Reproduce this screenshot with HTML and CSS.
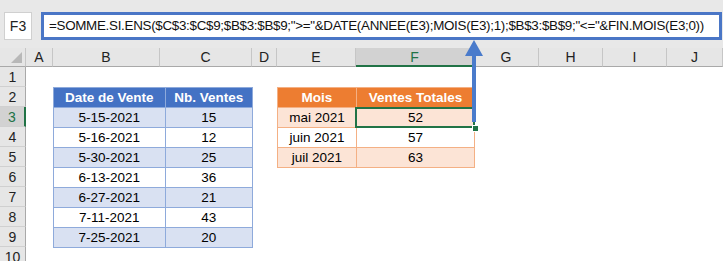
FILE: index.html
```html
<!DOCTYPE html>
<html lang="fr">
<head>
    <meta charset="UTF-8">
    <title>SOMME.SI.ENS par mois</title>
    <link rel="stylesheet" href="styles.css">
</head>
<body>
<div class="page">
    <div class="formulaBar">
        <div class="nameBox">F3</div>
        <div class="formulaBox">=SOMME.SI.ENS($C$3:$C$9;$B$3:$B$9;"&gt;="&amp;DATE(ANNEE(E3);MOIS(E3);1);$B$3:$B$9;"&lt;="&amp;FIN.MOIS(E3;0))</div>
    </div>
    <div class="sheet">
        <div class="corner"><span class="triangle"></span></div>
        <div class="colHead">A</div>
        <div class="colHead">B</div>
        <div class="colHead">C</div>
        <div class="colHead">D</div>
        <div class="colHead">E</div>
        <div class="colHead active">F</div>
        <div class="colHead">G</div>
        <div class="colHead">H</div>
        <div class="colHead">I</div>
        <div class="colHead">J</div>

        <div class="rowHead r1">1</div>
        <div class="rowHead r2">2</div>
        <div class="rowHead r3 active">3</div>
        <div class="rowHead r4">4</div>
        <div class="rowHead r5">5</div>
        <div class="rowHead r6">6</div>
        <div class="rowHead r7">7</div>
        <div class="rowHead r8">8</div>
        <div class="rowHead r9">9</div>
        <div class="rowHead r10">10</div>

        <table class="blueTable">
            <tr><th>Date de Vente</th><th>Nb. Ventes</th></tr>
            <tr class="band"><td>5-15-2021</td><td>15</td></tr>
            <tr><td>5-16-2021</td><td>12</td></tr>
            <tr class="band"><td>5-30-2021</td><td>25</td></tr>
            <tr><td>6-13-2021</td><td>36</td></tr>
            <tr class="band"><td>6-27-2021</td><td>21</td></tr>
            <tr><td>7-11-2021</td><td>43</td></tr>
            <tr class="band"><td>7-25-2021</td><td>20</td></tr>
        </table>

        <table class="orangeTable">
            <tr><th>Mois</th><th>Ventes Totales</th></tr>
            <tr class="band"><td>mai 2021</td><td class="selected">52<span class="handle"></span></td></tr>
            <tr><td>juin 2021</td><td>57</td></tr>
            <tr class="band"><td>juil 2021</td><td>63</td></tr>
        </table>
    </div>
    <svg class="arrow" width="22" height="86" viewBox="0 0 22 86">
        <path d="M11 2 L20 18 L13 18 L13 84 L9 84 L9 18 L2 18 Z" fill="#4a7bcb"/>
    </svg>
</div>
</body>
</html>
```

FILE: styles.css
```css
body {
    margin: 0;
    overflow: hidden;
    background-color: white;
    font-family: "Liberation Sans", Arial, sans-serif;
}

.page {
    position: relative;
    width: 723px;
    height: 261px;
    overflow: hidden;
}

.formulaBar {
    display: flex;
    align-items: flex-start;
    gap: 9px;
    height: 48px;
    padding: 12px 1px 0 4px;
    box-sizing: border-box;
    background-color: #e8e8e8;
}

.nameBox {
    width: 28px;
    height: 28px;
    box-sizing: border-box;
    border: 1px solid #d0d0d0;
    background-color: white;
    font-size: 14px;
    line-height: 26px;
    text-align: center;
    color: #222;
}

.formulaBox {
    flex: 1;
    height: 28px;
    box-sizing: border-box;
    border: 3px solid #4a76c6;
    background-color: white;
    padding-left: 5px;
    font-size: 13.4px;
    letter-spacing: -0.3px;
    line-height: 22px;
    color: #111;
    white-space: nowrap;
    overflow: hidden;
}

.sheet {
    display: grid;
    grid-template-columns: 26px 27px 107px 92px 25px 79px 118px 65px 64px 64px 56px;
    grid-template-rows: 19px repeat(10, 20px);
}

.corner {
    position: relative;
    background-color: #e6e6e6;
    border-right: 1px solid #c6c6c6;
    border-bottom: 1px solid #a9a9a9;
    box-sizing: border-box;
}

.triangle {
    position: absolute;
    right: 3px;
    bottom: 3px;
    width: 0;
    height: 0;
    border-left: 11px solid transparent;
    border-bottom: 11px solid #b8b8b8;
}

.colHead {
    background-color: #e6e6e6;
    border-right: 1px solid #c6c6c6;
    border-bottom: 1px solid #a9a9a9;
    box-sizing: border-box;
    font-size: 14px;
    line-height: 18px;
    text-align: center;
    color: #222;
}

.colHead.active {
    background-color: #d2d2d2;
    border-bottom: 2px solid #217346;
    color: #217346;
}

.rowHead {
    grid-column: 1;
    background-color: #e6e6e6;
    border-right: 1px solid #a9a9a9;
    border-bottom: 1px solid #d0d0d0;
    box-sizing: border-box;
    font-size: 14px;
    line-height: 20px;
    text-align: center;
    color: #222;
}

.rowHead.active {
    background-color: #d2d2d2;
    border-right: 2px solid #217346;
    color: #217346;
}

.r1 { grid-row: 2; }
.r2 { grid-row: 3; }
.r3 { grid-row: 4; }
.r4 { grid-row: 5; }
.r5 { grid-row: 6; }
.r6 { grid-row: 7; }
.r7 { grid-row: 8; }
.r8 { grid-row: 9; }
.r9 { grid-row: 10; }
.r10 { grid-row: 11; }

table {
    border-collapse: collapse;
    font-size: 13.5px;
    color: #000;
    align-self: start;
}

th, td {
    height: 19px;
    padding: 0;
    text-align: center;
    line-height: 19px;
}

th {
    color: white;
    font-weight: bold;
}

.blueTable {
    grid-column: 3 / 5;
    grid-row: 3 / 11;
    width: 200px;
}

.blueTable th, .blueTable td {
    border: 1px solid #8eaadb;
}

.blueTable th {
    background-color: #4472c4;
}

.blueTable .band td {
    background-color: #d9e1f2;
}

.orangeTable {
    grid-column: 6 / 8;
    grid-row: 3 / 7;
    width: 198px;
}

.orangeTable th, .orangeTable td {
    border: 1px solid #f4b084;
}

.orangeTable th {
    background-color: #ed7d31;
}

.orangeTable th:first-child, .orangeTable td:first-child {
    width: 78px;
}

.orangeTable .band td {
    background-color: #fce4d6;
}

.selected {
    position: relative;
}

.selected::after {
    content: "";
    position: absolute;
    left: -2px;
    top: -1px;
    right: -1px;
    bottom: -1px;
    border: 2px solid #217346;
}

.handle {
    position: absolute;
    right: -5px;
    bottom: -5px;
    width: 5px;
    height: 5px;
    background-color: #217346;
    border: 1px solid white;
    z-index: 2;
}

.arrow {
    position: absolute;
    left: 463px;
    top: 38px;
}
```
